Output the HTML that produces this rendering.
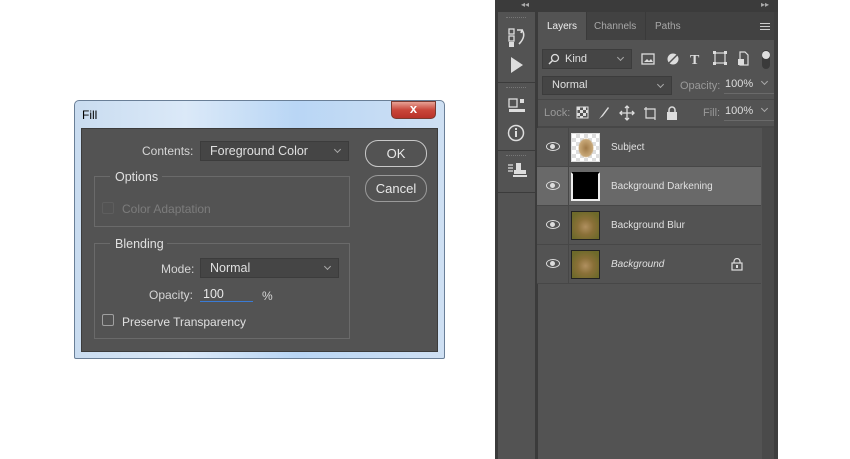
<!DOCTYPE html>
<html><head><meta charset="utf-8"><style>
*{box-sizing:border-box;margin:0;padding:0}
body{width:850px;height:459px;background:#fff;position:relative;overflow:hidden;font-family:"Liberation Sans",Arial,sans-serif;font-size:12px}
.a{position:absolute}
.t{color:#d6d6d6;font-size:12px;white-space:nowrap}
.dd{position:absolute;background:#454545;border:1px solid #3c3c3c;color:#e0e0e0;padding-left:9px;font-size:12.5px}
.dd:after{content:"";position:absolute;right:8px;top:30%;width:4px;height:4px;border-right:1px solid #aaa;border-bottom:1px solid #aaa;transform:rotate(45deg)}
.btn{position:absolute;border:1px solid #c8c8c8;border-radius:13px;color:#e8e8e8;text-align:center;font-size:13px}
.grp{position:absolute;border:1px solid #6a6a6a;border-top-color:#666}
.row{position:absolute;left:537px;width:224px;height:39px;border-bottom:1px solid #474747;background:#535353}
.eye{position:absolute;left:9px;top:14px;width:14px;height:9px;border:1.6px solid #ddd;border-radius:50%/50%}
.eye:after{content:"";position:absolute;left:3px;top:1px;width:5px;height:5px;background:#ddd;border-radius:50%}
.th{position:absolute;left:34px;top:5px;width:29px;height:29px;border:1px solid #222}
.ln{position:absolute;left:74px;top:14px;color:#e0e0e0;font-size:10px}
</style></head><body>

<div class="a" style="left:74px;top:100px;width:371px;height:259px;border:1px solid #6a7f97;border-radius:5px 5px 2px 2px;background:linear-gradient(90deg,#c9dcf0 0%,#dbe9f8 30%,#b9d6f5 60%,#cfe0f3 100%)"></div>
<div class="a" style="left:82px;top:108px;font-size:12px;color:#000">Fill</div>
<div class="a" style="left:391px;top:101px;width:45px;height:18px;border:1px solid #7a3a30;border-radius:0 0 5px 5px;background:linear-gradient(#e8a295,#c9463a 50%,#b8322a)"></div>
<div class="a" style="left:391px;top:101px;width:45px;text-align:center;color:#fff;font-weight:bold;font-size:13px">x</div>
<div class="a" style="left:81px;top:128px;width:357px;height:224px;background:#535353;border:1px solid #3c3c3c"></div>

<div class="a t" style="left:142px;top:144px">Contents:</div>
<div class="dd" style="left:200px;top:141px;width:149px;height:20px;line-height:18px">Foreground Color</div>
<div class="btn" style="left:365px;top:140px;width:62px;height:27px;line-height:25px">OK</div>
<div class="btn" style="left:365px;top:175px;width:62px;height:27px;line-height:25px;border-color:#9a9a9a">Cancel</div>

<div class="grp" style="left:94px;top:176px;width:256px;height:51px;border-top:none"></div>
<div class="a" style="left:94px;top:176px;width:16px;border-top:1px solid #6a6a6a"></div>
<div class="a" style="left:162px;top:176px;width:188px;border-top:1px solid #6a6a6a"></div>
<div class="a t" style="left:115px;top:170px;font-size:12.5px;color:#e0e0e0">Options</div>
<div class="a" style="left:102px;top:202px;width:12px;height:12px;border:1px solid #5e5e5e;border-radius:2px"></div>
<div class="a t" style="left:122px;top:202px;color:#7c7c7c">Color Adaptation</div>

<div class="grp" style="left:94px;top:243px;width:256px;height:96px;border-top:none"></div>
<div class="a" style="left:94px;top:243px;width:16px;border-top:1px solid #6a6a6a"></div>
<div class="a" style="left:167px;top:243px;width:183px;border-top:1px solid #6a6a6a"></div>
<div class="a t" style="left:115px;top:237px;font-size:12.5px;color:#e0e0e0">Blending</div>
<div class="a t" style="left:161px;top:262px">Mode:</div>
<div class="dd" style="left:200px;top:258px;width:139px;height:20px;line-height:18px">Normal</div>
<div class="a t" style="left:149px;top:288px">Opacity:</div>
<div class="a" style="left:200px;top:287px;width:53px;height:15px;border-bottom:1px solid #3a7bd5;color:#e8e8e8;font-size:12.5px;padding-left:3px">100</div>
<div class="a t" style="left:262px;top:289px">%</div>
<div class="a" style="left:102px;top:314px;width:12px;height:12px;border:1px solid #a0a0a0;border-radius:2px"></div>
<div class="a t" style="left:122px;top:315px;color:#e0e0e0">Preserve Transparency</div>

<div class="a" style="left:495px;top:0;width:283px;height:459px;background:#535353"></div>
<div class="a" style="left:495px;top:0;width:283px;height:12px;background:#3b3b3b"></div>
<div class="a" style="left:521px;top:0;color:#aaa;font-size:8px">◂◂</div>
<div class="a" style="left:761px;top:0;color:#aaa;font-size:8px">▸▸</div>
<div class="a" style="left:495px;top:12px;width:3px;height:447px;background:#3b3b3b"></div>
<div class="a" style="left:535px;top:12px;width:3px;height:447px;background:#3b3b3b"></div>
<div class="a" style="left:774px;top:12px;width:4px;height:447px;background:#3e3e3e"></div>
<div class="a" style="left:498px;top:82px;width:37px;height:1px;background:#3b3b3b"></div>
<div class="a" style="left:498px;top:150px;width:37px;height:1px;background:#3b3b3b"></div>
<div class="a" style="left:498px;top:192px;width:37px;height:1px;background:#3b3b3b"></div>
<div class="a" style="left:506px;top:17px;width:20px;height:1px;border-top:1px dotted #777"></div>
<div class="a" style="left:506px;top:87px;width:20px;height:1px;border-top:1px dotted #777"></div>
<div class="a" style="left:506px;top:155px;width:20px;height:1px;border-top:1px dotted #777"></div>
<svg class="a" style="left:498px;top:24px" width="37" height="165" viewBox="0 0 37 165">
 <g fill="none" stroke="#ddd" stroke-width="1.3"><rect x="11" y="5" width="5" height="5"/><rect x="11" y="12" width="5" height="5"/></g>
 <rect x="11" y="18" width="5" height="5" fill="#ddd"/>
 <path d="M19 6h5l-1 3 M24 6c3 4 2 9-3 14" fill="none" stroke="#ddd" stroke-width="1.6"/>
 <path d="M13 33l12 8-12 8z" fill="#ddd"/>
 <rect x="11" y="75" width="8" height="8" fill="none" stroke="#ddd" stroke-width="1.3"/>
 <rect x="22" y="75" width="4" height="4" fill="#ddd"/><rect x="11" y="85" width="16" height="3" fill="#ddd"/>
 <circle cx="18" cy="109" r="7.5" fill="none" stroke="#ddd" stroke-width="1.5"/>
 <rect x="17" y="107" width="2" height="6" fill="#ddd"/><rect x="17" y="104" width="2" height="2" fill="#ddd"/>
 <path d="M10 141h5M10 144h5M10 147h5" stroke="#ddd" stroke-width="1.2"/>
 <rect x="18" y="139" width="5" height="7" fill="#ddd"/><rect x="16" y="146" width="12" height="4" fill="#ddd"/><rect x="15" y="151" width="14" height="2" fill="#ddd"/>
</svg>

<div class="a" style="left:538px;top:12px;width:236px;height:28px;background:#424242"></div>
<div class="a" style="left:538px;top:12px;width:48px;height:29px;background:#535353"></div>
<div class="a" style="left:547px;top:21px;color:#eee;font-size:10px">Layers</div>
<div class="a" style="left:586px;top:12px;width:1px;height:28px;background:#3a3a3a"></div>
<div class="a" style="left:594px;top:21px;color:#a8a8a8;font-size:10px">Channels</div>
<div class="a" style="left:645px;top:12px;width:1px;height:28px;background:#3a3a3a"></div>
<div class="a" style="left:655px;top:21px;color:#a8a8a8;font-size:10px">Paths</div>
<div class="a" style="left:760px;top:23px;width:10px;height:7px;border-top:1px solid #ccc;border-bottom:1px solid #ccc"></div>
<div class="a" style="left:760px;top:26px;width:10px;height:1px;background:#ccc"></div>

<div class="dd" style="left:542px;top:49px;width:90px;height:20px;line-height:18px;padding-left:22px;font-size:11px">Kind</div>
<svg class="a" style="left:548px;top:53px" width="12" height="12"><circle cx="7" cy="5" r="3.5" fill="none" stroke="#ddd" stroke-width="1.3"/><path d="M4.5 7.5L1 11" stroke="#ddd" stroke-width="1.5"/></svg>
<svg class="a" style="left:638px;top:49px" width="140" height="22" viewBox="0 0 140 22">
 <rect x="4" y="5" width="12" height="10" fill="none" stroke="#ddd" stroke-width="1.3"/><path d="M6 13l3-3 2 2 2-2 2 3z" fill="#ddd"/>
 <circle cx="35" cy="10" r="5.5" fill="#ddd"/><path d="M31 14L39 6" stroke="#535353" stroke-width="1.5"/>
 <text x="52" y="15" fill="#ddd" font-family="Liberation Serif" font-weight="bold" font-size="14">T</text>
 <rect x="77" y="4" width="10" height="10" fill="none" stroke="#ddd" stroke-width="1.2"/><g fill="#ddd"><rect x="75" y="2" width="3" height="3"/><rect x="86" y="2" width="3" height="3"/><rect x="75" y="13" width="3" height="3"/><rect x="86" y="13" width="3" height="3"/></g>
 <path d="M102 3h5l3 3v10h-8z" fill="none" stroke="#ddd" stroke-width="1.2"/><rect x="100" y="10" width="6" height="6" fill="#ddd"/>
 <rect x="124" y="1" width="8" height="19" rx="4" fill="#3a3a3a"/><circle cx="128" cy="6" r="4" fill="#ddd"/>
</svg>
<div class="dd" style="left:542px;top:76px;width:130px;height:19px;line-height:17px;font-size:11px">Normal</div>
<div class="a" style="left:680px;top:80px;color:#999;font-size:11px">Opacity:</div>
<div class="a" style="left:724px;top:78px;width:50px;height:16px;border-bottom:1px solid #6a6a6a;color:#ddd;font-size:11px;padding-left:1px">100%</div>
<div class="a" style="left:762px;top:79px;width:5px;height:5px;border-right:1px solid #aaa;border-bottom:1px solid #aaa;transform:rotate(45deg)"></div>
<div class="a" style="left:538px;top:99px;width:236px;height:1px;background:#474747"></div>
<div class="a" style="left:544px;top:107px;color:#999;font-size:11px">Lock:</div>
<svg class="a" style="left:574px;top:104px" width="110" height="18" viewBox="0 0 110 18">
 <rect x="3" y="3" width="11" height="11" fill="none" stroke="#ddd"/><g fill="#ddd"><rect x="3" y="3" width="3" height="3"/><rect x="9" y="3" width="3" height="3"/><rect x="6" y="6" width="3" height="3"/><rect x="12" y="6" width="2" height="3"/><rect x="3" y="9" width="3" height="3"/><rect x="9" y="9" width="3" height="3"/><rect x="6" y="12" width="3" height="2"/></g>
 <path d="M25 15l3-4 6-8 1 1-6 8z" fill="#ddd"/>
 <path d="M53 2v14M46 9h14M51 4l2-2 2 2M51 14l2 2 2-2M48 7l-2 2 2 2M58 7l2 2-2 2" fill="none" stroke="#ddd" stroke-width="1.3"/>
 <path d="M72 5h9v9M72 5v9h9M70 5h2M81 14v2M72 3v2" fill="none" stroke="#ddd" stroke-width="1.2"/>
 <rect x="93" y="8" width="10" height="8" fill="#ddd"/><path d="M95 8V6a3 3 0 0 1 6 0v2" fill="none" stroke="#ddd" stroke-width="1.5"/>
</svg>
<div class="a" style="left:703px;top:107px;color:#999;font-size:11px">Fill:</div>
<div class="a" style="left:724px;top:105px;width:50px;height:16px;border-bottom:1px solid #6a6a6a;color:#ddd;font-size:11px;padding-left:1px">100%</div>
<div class="a" style="left:762px;top:106px;width:5px;height:5px;border-right:1px solid #aaa;border-bottom:1px solid #aaa;transform:rotate(45deg)"></div>
<div class="a" style="left:538px;top:126px;width:236px;height:2px;background:#474747"></div>
<div class="a" style="left:762px;top:128px;width:12px;height:331px;background:#4a4a4a"></div>

<div class="row" style="top:128px"><div class="eye"></div><div class="a" style="left:31px;top:0;width:1px;height:39px;background:#474747"></div><div class="th" style="border-color:#ddd;background:repeating-conic-gradient(#ddd 0 25%,#fff 0 50%) 0 0/8px 8px"><div style="position:absolute;left:6px;top:4px;width:16px;height:20px;border-radius:40%;background:radial-gradient(#a07a48,#c8a878 60%,transparent 70%)"></div></div><div class="ln">Subject</div></div>
<div class="row" style="top:167px;background:#696969"><div class="eye"></div><div class="a" style="left:31px;top:0;width:1px;height:39px;background:#474747"></div><div class="th" style="background:#000;border:2px solid #eee;border-top-color:#000;border-bottom-color:#eee"></div><div class="ln">Background Darkening</div></div>
<div class="row" style="top:206px"><div class="eye"></div><div class="a" style="left:31px;top:0;width:1px;height:39px;background:#474747"></div><div class="th" style="background:radial-gradient(circle at 50% 55%,#b09060 0,#8a7038 40%,#6e6a2a 80%)"></div><div class="ln">Background Blur</div></div>
<div class="row" style="top:245px"><div class="eye"></div><div class="a" style="left:31px;top:0;width:1px;height:39px;background:#474747"></div><div class="th" style="background:radial-gradient(circle at 50% 55%,#b09060 0,#8a7038 40%,#6e6a2a 80%)"></div><div class="ln" style="font-style:italic">Background</div>
<svg class="a" style="left:194px;top:13px" width="12" height="13"><rect x="1" y="5" width="10" height="7" fill="none" stroke="#ddd" stroke-width="1.2"/><path d="M3 5V3.5a3 3 0 0 1 6 0V5" fill="none" stroke="#ddd" stroke-width="1.2"/><rect x="5" y="7" width="2" height="3" fill="#ddd"/></svg></div>
</body></html>
